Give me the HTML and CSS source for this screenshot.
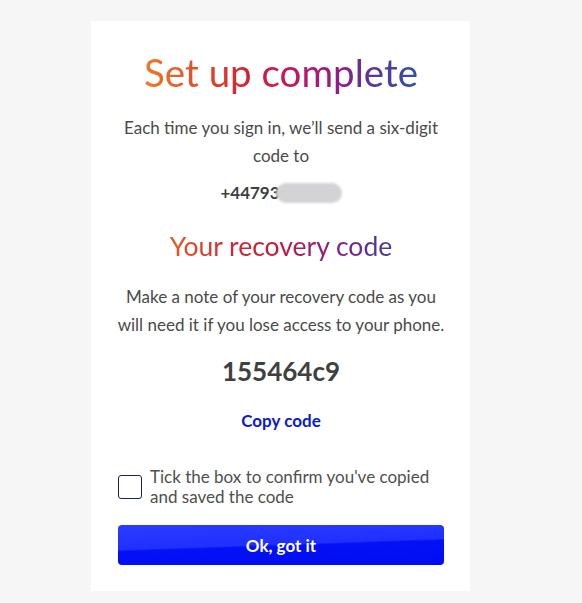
FILE: index.html
```html
<!DOCTYPE html>
<html lang="en">
<head>
<meta charset="utf-8">
<title>Set up complete</title>
<link rel="stylesheet" href="styles.css">
</head>
<body>
<main class="card">
  <h1 class="title gradient">Set up complete</h1>
  <p class="text">Each time you sign in, we’ll send a six-digit code to</p>
  <p class="phone">+44793<span class="redact"></span></p>
  <h2 class="subtitle gradient">Your recovery code</h2>
  <p class="text">Make a note of your recovery code as you will need it if you lose access to your phone.</p>
  <p class="code">155464c9</p>
  <a class="copy" href="#">Copy code</a>
  <label class="confirm">
    <span class="box"></span>
    <span class="confirm-text">Tick the box to confirm you've copied and saved the code</span>
  </label>
  <button class="btn" type="button">Ok, got it</button>
</main>
</body>
</html>
```
FILE: styles.css
```css
html, body {
  margin: 0;
  padding: 0;
}
body {
  background: #f6f6f6;
  font-family: Lato, "Open Sans", "Liberation Sans", sans-serif;
  color: #4a4a4a;
  width: 582px;
  height: 603px;
  overflow: hidden;
}
.card {
  box-sizing: border-box;
  width: 379px;
  height: 570px;
  margin: 21px 0 0 91px;
  padding: 29px 26px 0 27px;
  background: #ffffff;
  display: flex;
  flex-direction: column;
  align-items: center;
  text-align: center;
}
.gradient {
  -webkit-background-clip: text;
  background-clip: text;
  color: transparent;
}
.title {
  margin: 0;
  font-size: 38.5px;
  line-height: 44px;
  font-weight: 400;
  background-image: linear-gradient(90deg, #ef7a24 0%, #e2462a 22%, #d61f33 38%, #c3155f 55%, #8f1c8c 72%, #513a9f 86%, #2e4fa6 100%);
}
.text {
  margin: 20px 0 0;
  font-size: 17px;
  line-height: 28px;
  width: 332px;
  flex: none;
}
.phone {
  margin: 11px 0 0;
  font-size: 17px;
  line-height: 24px;
  font-weight: 700;
  color: #3f3f3f;
  display: flex;
  align-items: center;
}
.redact {
  display: inline-block;
  width: 66px;
  height: 20px;
  margin-left: -4px;
  border-radius: 10px;
  background: #d3d3d5;
  filter: blur(1px);
}
.subtitle {
  margin: 25px 0 0;
  font-size: 26.5px;
  line-height: 32px;
  font-weight: 400;
  background-image: linear-gradient(90deg, #ea5a22 0%, #d8262f 25%, #c4183e 50%, #8a1e88 75%, #3e3f98 100%);
}
.subtitle + .text {
  margin-top: 21px;
}
.code {
  margin: 16px 0 0;
  font-size: 26px;
  line-height: 32px;
  font-weight: 700;
  color: #404040;
}
.copy {
  margin-top: 22px;
  font-size: 17px;
  line-height: 24px;
  font-weight: 700;
  color: #0a1ad0;
  text-decoration: none;
}
.confirm {
  margin-top: 34px;
  align-self: stretch;
  display: flex;
  align-items: flex-start;
  gap: 8px;
  text-align: left;
}
.box {
  flex: none;
  box-sizing: border-box;
  width: 24px;
  height: 24px;
  margin-top: 8px;
  border: 1.5px solid #1a1f6b;
  border-radius: 3px;
}
.confirm-text {
  max-width: 280px;
  font-size: 17px;
  line-height: 20px;
  color: #4f4f4f;
}
.btn {
  margin-top: 18px;
  align-self: stretch;
  height: 40px;
  border: 0;
  border-radius: 4px;
  background: linear-gradient(178deg, #2a3cff 0%, #1f30ff 48%, #0411f6 52%, #000cf2 100%);
  color: #ffffff;
  font-family: inherit;
  font-size: 17px;
  font-weight: 700;
  cursor: pointer;
}
```
